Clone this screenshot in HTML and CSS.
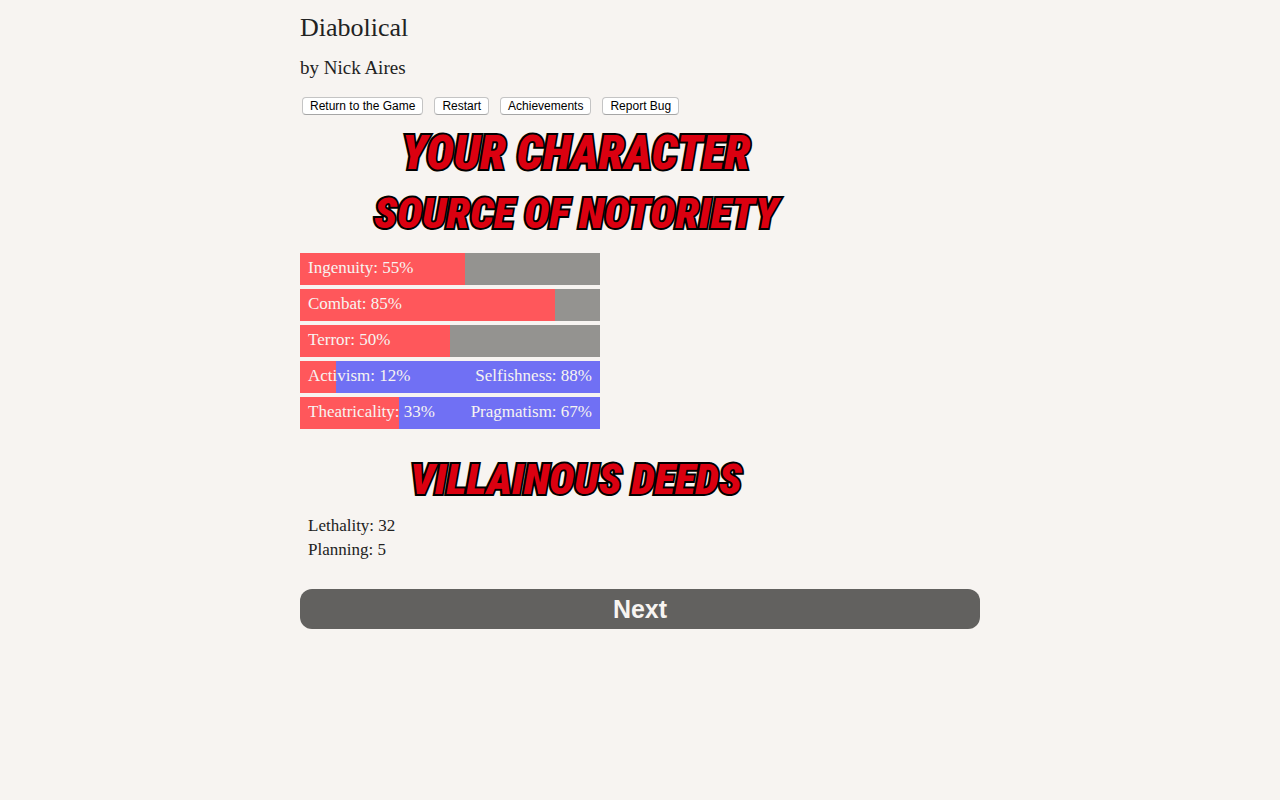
FILE: index.html
```html
<!DOCTYPE html>
<html lang="en">
<head>
<meta charset="utf-8">
<title>Diabolical</title>
<link rel="stylesheet" href="styles.css">
</head>
<body>
<main class="page">
  <header>
    <h1 class="title">Diabolical</h1>
    <h2 class="author">by Nick Aires</h2>
    <nav class="toolbar">
      <button type="button" class="tool">Return to the Game</button>
      <button type="button" class="tool">Restart</button>
      <button type="button" class="tool">Achievements</button>
      <button type="button" class="tool">Report Bug</button>
    </nav>
  </header>
  <h2 class="banner banner-large">YOUR CHARACTER</h2>
  <h3 class="banner banner-source">SOURCE OF NOTORIETY</h3>
  <section class="stats">
    <div class="stat"><div class="fill" style="width:55%"></div><span class="label">Ingenuity: 55%</span></div>
    <div class="stat"><div class="fill" style="width:85%"></div><span class="label">Combat: 85%</span></div>
    <div class="stat"><div class="fill" style="width:50%"></div><span class="label">Terror: 50%</span></div>
    <div class="stat opposed"><div class="fill" style="width:12%"></div><span class="label">Activism: 12%</span><span class="label">Selfishness: 88%</span></div>
    <div class="stat opposed"><div class="fill" style="width:33%"></div><span class="label">Theatricality: 33%</span><span class="label">Pragmatism: 67%</span></div>
  </section>
  <h3 class="banner banner-deeds">VILLAINOUS DEEDS</h3>
  <section class="deeds">
    <div>Lethality: 32</div>
    <div>Planning: 5</div>
  </section>
  <button type="button" class="next">Next</button>
</main>
</body>
</html>
```
FILE: styles.css
```css
* { box-sizing: border-box; }
body {
  margin: 0;
  background: #f7f4f1;
  color: #222;
  font: 17px/24px Palatino, "Liberation Serif", serif;
}
.page { max-width: 696px; margin: 0 auto; padding: 12px 8px; }
.title, .author { margin: 0; font-weight: normal; }
.title { font-size: 26px; line-height: 32px; }
.author { margin-top: 12px; font-size: 19px; line-height: 24px; }
.toolbar { display: flex; gap: 11px; margin: 17px 2px 0; }
.tool {
  height: 18px;
  padding: 0 7px;
  border: 1px solid #c4c4c4;
  border-bottom-color: #a6a6a6;
  border-radius: 4px;
  background: #fff;
  color: #000;
  font: 12px/14px "Liberation Sans", sans-serif;
  white-space: nowrap;
}
.banner {
  max-width: 552px;
  margin: 0;
  color: #db0010;
  font-family: "Roboto Condensed", Roboto, sans-serif;
  font-weight: 900;
  font-style: italic;
  text-align: center;
  white-space: nowrap;
  -webkit-text-stroke: 4px #000;
  paint-order: stroke fill;
}
.banner-large { margin-top: 14px; font-size: 47px; line-height: 48px; }
.banner-source { margin-top: 12px; font-size: 43px; line-height: 48px; }
.banner-deeds { margin-top: 26px; font-size: 43px; line-height: 48px; }
.stats { display: grid; gap: 4px; max-width: 300px; margin-top: 16px; }
.stat {
  position: relative;
  display: flex;
  justify-content: space-between;
  height: 32px;
  padding: 3px 8px 5px;
  background: #949390;
  color: #f7f4f1;
}
.opposed { background: #7070f4; }
.fill { position: absolute; inset: 0 auto 0 0; background: #ff575b; }
.label { position: relative; }
.deeds { margin-top: 11px; padding: 0 8px; }
.next {
  display: block;
  width: 100%;
  height: 40px;
  margin-top: 27px;
  padding: 0;
  border: 0;
  border-radius: 12px;
  background: #62615f;
  color: #f7f4f1;
  font: bold 25px/40px "Liberation Sans", sans-serif;
}
```
